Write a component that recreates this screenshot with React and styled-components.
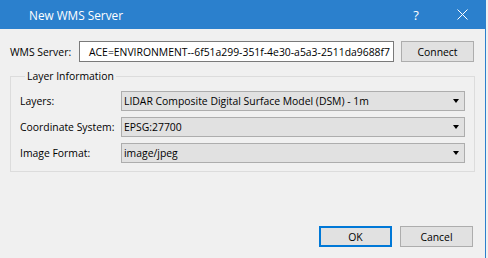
import styled, { createGlobalStyle } from "styled-components";

const Global = createGlobalStyle`
  html, body {
    margin: 0;
    padding: 0;
    background: #f0f0f0;
  }
  body {
    font-family: "Open Sans", "Noto Sans", sans-serif;
    font-size: 10.4px;
    color: #000;
  }
`;

const Window = styled.div`
  width: 486px;
  height: 258px;
  box-sizing: border-box;
  border-right: 1px solid #2b80cd;
  background: #f0f0f0;
  display: flex;
  flex-direction: column;
  overflow: hidden;
`;

const TitleBar = styled.div`
  height: 29px;
  flex: none;
  background: #2b80cd;
  color: #fff;
  display: flex;
  align-items: center;
  padding-left: 29px;
  font-size: 11.8px;
  .title {
    flex: 1;
  }
`;

const TitleButton = styled.div`
  width: 46px;
  height: 29px;
  display: flex;
  align-items: center;
  justify-content: center;
  color: #fff;
  font-size: 13px;
`;

const Body = styled.div`
  flex: 1;
  display: flex;
  flex-direction: column;
  padding: 12px 11px 11px 10px;
`;

const ServerRow = styled.div`
  display: flex;
  align-items: center;
  height: 21px;
  label {
    width: 69px;
    flex: none;
  }
`;

const UrlBox = styled.div`
  width: 315px;
  height: 21px;
  box-sizing: border-box;
  border: 1px solid #7a7a7a;
  background: #fff;
  display: flex;
  align-items: center;
  justify-content: flex-end;
  overflow: hidden;
  white-space: nowrap;
  padding-right: 3px;
  margin-right: 7px;
`;

const Button = styled.button`
  width: 73px;
  height: 21px;
  box-sizing: border-box;
  background: #e1e1e1;
  border: ${(p) => (p.$default ? "2px solid #0078d7" : "1px solid #adadad")};
  font: inherit;
  color: #000;
  padding: 0;
  border-radius: 0;
`;

const Group = styled.fieldset`
  margin: 7px 0 0 0;
  width: 465px;
  box-sizing: border-box;
  border: 1px solid #dcdcdc;
  padding: 8px 9px 8px 9px;
  display: flex;
  flex-direction: column;
  gap: 6px;
  legend {
    margin-left: 5px;
    padding: 0 2px;
  }
`;

const FieldRow = styled.div`
  display: flex;
  align-items: center;
  label {
    width: 101px;
    flex: none;
  }
`;

const Combo = styled.div`
  width: 344px;
  height: 20px;
  box-sizing: border-box;
  background: #e1e1e1;
  border: 1px solid #adadad;
  display: flex;
  align-items: center;
  padding: 0 5px 0 2px;
  white-space: nowrap;
  span {
    flex: 1;
  }
  &::after {
    content: "";
    border-left: 3.5px solid transparent;
    border-right: 3.5px solid transparent;
    border-top: 4px solid #000;
  }
`;

const Footer = styled.div`
  margin-top: auto;
  display: flex;
  justify-content: flex-end;
  gap: 8px;
  padding-right: 1px;
`;

const fields = [
  ["Layers:", "LIDAR Composite Digital Surface Model (DSM) - 1m"],
  ["Coordinate System:", "EPSG:27700"],
  ["Image Format:", "image/jpeg"],
];

export default function App() {
  return (
    <>
      <Global />
      <Window>
        <TitleBar>
          <span className="title">New WMS Server</span>
          <TitleButton>?</TitleButton>
          <TitleButton>
            <svg width="11" height="11" viewBox="0 0 11 11">
              <path d="M0.5 0.5 L10.5 10.5 M10.5 0.5 L0.5 10.5" stroke="#fff" strokeWidth="1" />
            </svg>
          </TitleButton>
        </TitleBar>
        <Body>
          <ServerRow>
            <label>WMS Server:</label>
            <UrlBox>ACE=ENVIRONMENT--6f51a299-351f-4e30-a5a3-2511da9688f7</UrlBox>
            <Button>Connect</Button>
          </ServerRow>
          <Group>
            <legend>Layer Information</legend>
            {fields.map(([label, value]) => (
              <FieldRow key={label}>
                <label>{label}</label>
                <Combo>
                  <span>{value}</span>
                </Combo>
              </FieldRow>
            ))}
          </Group>
          <Footer>
            <Button $default>OK</Button>
            <Button>Cancel</Button>
          </Footer>
        </Body>
      </Window>
    </>
  );
}
